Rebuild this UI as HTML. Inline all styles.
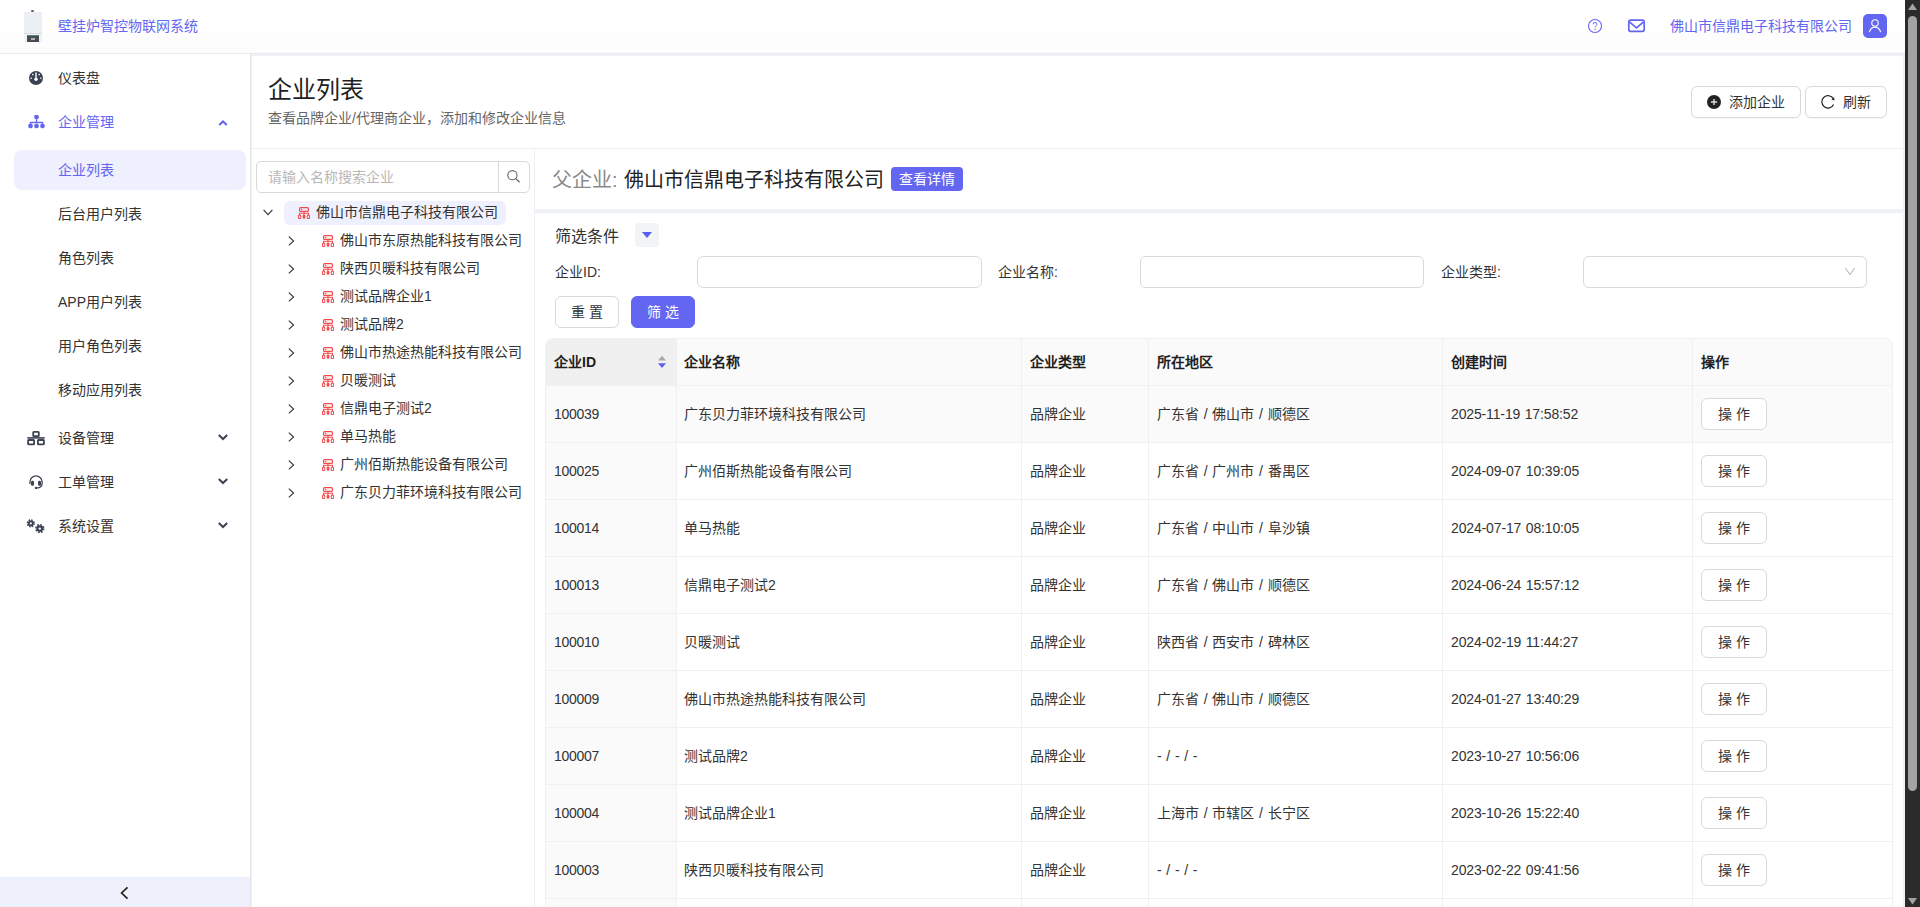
<!DOCTYPE html>
<html lang="zh-CN">
<head>
<meta charset="utf-8">
<style>
*{box-sizing:border-box;margin:0;padding:0}
html,body{width:1920px;height:907px;overflow:hidden}
body{font-family:"Liberation Sans",sans-serif;font-size:14px;color:#333;background:#fff;position:relative}
.abs{position:absolute}
#hdr{position:absolute;left:0;top:0;width:1905px;height:54px;background:linear-gradient(#fff 0,#fff 32px,#fdfdfd 32px);border-bottom:1px solid #eaeaea}
#side{position:absolute;left:0;top:54px;width:250px;height:853px;background:#fff}
#mainbg{position:absolute;left:250px;top:54px;width:1655px;height:853px;background:#eef2f6;border-left:1px solid #e3e5e9}
#main{position:absolute;left:252px;top:56px;width:1651px;height:851px;background:#fff}
#sb{position:absolute;left:1905px;top:0;width:15px;height:907px;background:#2b2b2b}
.nav{position:absolute;left:58px;font-size:14px;color:#333;line-height:20px;white-space:nowrap}

.btn{position:absolute;border:1px solid #d9d9d9;border-radius:6px;background:#fff;font-size:14px;line-height:30px;color:#333;white-space:nowrap;box-shadow:0 1px 1px rgba(0,0,0,.03)}
.btn2{position:absolute;border:1px solid #d9d9d9;border-radius:6px;background:#fff;font-size:14px;line-height:30px;text-align:center;white-space:nowrap}
.tn{position:absolute;font-size:14px;line-height:20px;color:#333;white-space:nowrap}
.lbl{position:absolute;top:262px;font-size:14px;line-height:20px;color:#333;white-space:nowrap}
.inp{position:absolute;top:256px;width:285px;height:32px;border:1px solid #d9d9d9;border-radius:6px;background:#fff}
.th{position:absolute;top:352px;font-size:14px;line-height:20px;font-weight:bold;color:#1f1f1f;white-space:nowrap}
.td{position:absolute;font-size:14px;line-height:20px;color:#333;white-space:nowrap;word-spacing:.8px}
.ob{position:absolute;left:1701px;width:66px;height:32px;border:1px solid #d9d9d9;border-radius:6px;background:#fff;font-size:14px;line-height:30px;text-align:center;color:#333}
</style>
</head>
<body>
<div id="hdr">
  <div class="abs" style="left:31px;top:10px;width:3px;height:2px;background:#666;border-radius:1px"></div>
  <div class="abs" style="left:24px;top:12px;width:18px;height:30px;background:#eceff3"></div>
  <div class="abs" style="left:24px;top:33px;width:18px;height:1px;background:#d8dce2"></div>
  <div class="abs" style="left:24px;top:34px;width:18px;height:8px;background:#f0f2f5"></div><div class="abs" style="left:27px;top:35px;width:12px;height:7px;background:#474c57"></div><div class="abs" style="left:27px;top:35px;width:12px;height:1px;background:#4f8a63"></div><div class="abs" style="left:31px;top:38px;width:4px;height:1.5px;background:#aeb3ba"></div>
  <div class="nav" style="left:58px;top:16px;color:#6366f1">壁挂炉智控物联网系统</div>
  <div class="nav" style="left:1670px;top:16px;color:#6366f1">佛山市信鼎电子科技有限公司</div>
  <div class="abs" style="left:1863px;top:14px;width:24px;height:24px;background:#6366f1;border-radius:5px"></div>
</div>
<div id="side">
  <div class="abs" style="left:14px;top:96px;width:232px;height:40px;background:#eef0fd;border-radius:8px"></div>
  <div class="nav" style="top:14px">仪表盘</div>
  <div class="nav" style="top:58px;color:#6366f1">企业管理</div>
  <div class="nav" style="top:106px;color:#6366f1">企业列表</div>
  <div class="nav" style="top:150px">后台用户列表</div>
  <div class="nav" style="top:194px">角色列表</div>
  <div class="nav" style="top:238px">APP用户列表</div>
  <div class="nav" style="top:282px">用户角色列表</div>
  <div class="nav" style="top:326px">移动应用列表</div>
  <div class="nav" style="top:374px">设备管理</div>
  <div class="nav" style="top:418px">工单管理</div>
  <div class="nav" style="top:462px">系统设置</div>
  <div class="abs" style="left:0;top:823px;width:250px;height:30px;background:#eef0fc"></div>
</div>
<div id="mainbg"></div>

<div id="main"></div>
<!-- page header -->
<div class="abs" style="left:268px;top:76px;font-size:24px;line-height:28px;color:#1f1f1f;white-space:nowrap">企业列表</div>
<div class="abs" style="left:268px;top:108px;font-size:14px;line-height:20px;color:#666;white-space:nowrap">查看品牌企业/代理商企业，添加和修改企业信息</div>
<div class="btn" style="left:1691px;top:86px;width:110px;height:32px"><span style="position:absolute;left:37px;top:0">添加企业</span></div>
<div class="btn" style="left:1805px;top:86px;width:82px;height:32px"><span style="position:absolute;left:37px;top:0">刷新</span></div>
<div class="abs" style="left:251px;top:148px;width:1652px;height:1px;background:#eef0f5"></div>
<!-- tree panel -->
<div class="abs" style="left:534px;top:149px;width:1px;height:758px;background:#eef0f5"></div>
<div class="abs" style="left:256px;top:161px;width:274px;height:32px;border:1px solid #d9d9d9;border-radius:5px;background:#fff"></div>
<div class="abs" style="left:498px;top:162px;width:1px;height:30px;background:#d9d9d9"></div>
<div class="abs" style="left:268px;top:167px;font-size:14px;line-height:20px;color:#b8b8b8;white-space:nowrap">请输入名称搜索企业</div>
<div class="abs" style="left:284px;top:201px;width:222px;height:24px;background:#eef0fd;border-radius:6px"></div>
<div class="tn" style="left:316px;top:202px">佛山市信鼎电子科技有限公司</div>
<div class="tn" style="left:340px;top:230px">佛山市东原热能科技有限公司</div>
<div class="tn" style="left:340px;top:258px">陕西贝暖科技有限公司</div>
<div class="tn" style="left:340px;top:286px">测试品牌企业1</div>
<div class="tn" style="left:340px;top:314px">测试品牌2</div>
<div class="tn" style="left:340px;top:342px">佛山市热途热能科技有限公司</div>
<div class="tn" style="left:340px;top:370px">贝暖测试</div>
<div class="tn" style="left:340px;top:398px">信鼎电子测试2</div>
<div class="tn" style="left:340px;top:426px">单马热能</div>
<div class="tn" style="left:340px;top:454px">广州佰斯热能设备有限公司</div>
<div class="tn" style="left:340px;top:482px">广东贝力菲环境科技有限公司</div>

<!-- right panel -->
<div class="abs" style="left:552px;top:166px;font-size:20px;line-height:28px;color:#8a8a8a;white-space:nowrap">父企业:</div>
<div class="abs" style="left:624px;top:166px;font-size:20px;line-height:28px;color:#222;white-space:nowrap">佛山市信鼎电子科技有限公司</div>
<div class="abs" style="left:891px;top:167px;width:72px;height:24px;background:#6366f1;border-radius:4px;color:#fff;font-size:14px;line-height:24px;text-align:center">查看详情</div>
<div class="abs" style="left:535px;top:209px;width:1368px;height:4px;background:#eef1f6"></div>
<div class="abs" style="left:555px;top:226px;font-size:16px;line-height:22px;color:#333;white-space:nowrap">筛选条件</div>
<div class="abs" style="left:635px;top:223px;width:24px;height:24px;background:#f3f4f6;border-radius:4px"></div>
<div class="lbl" style="left:555px">企业ID:</div>
<div class="lbl" style="left:998px">企业名称:</div>
<div class="lbl" style="left:1441px">企业类型:</div>
<div class="inp" style="left:697px"></div>
<div class="inp" style="left:1140px;width:284px"></div>
<div class="inp" style="left:1583px;width:284px"></div>
<div class="btn2" style="left:555px;top:296px;width:64px;height:32px;color:#333">重 置</div>
<div class="btn2" style="left:631px;top:296px;width:64px;height:32px;background:#6366f1;border-color:#6366f1;color:#fff">筛 选</div>
<div class="abs" style="left:545px;top:338px;width:1348px;height:569px;border-radius:8px 8px 0 0;overflow:hidden;border:1px solid #f0f0f0;border-bottom:none">
<div class="abs" style="left:0;top:0;width:1347px;height:46px;background:#fafafa"></div>
<div class="abs" style="left:0;top:0;width:130px;height:46px;background:#f0f0f0"></div>
<div class="abs" style="left:0;top:46px;width:1347px;height:57px;background:#fafafa"></div>
<div class="abs" style="left:0;top:103px;width:130px;height:470px;background:#fafafa"></div>
<div class="abs" style="left:130px;top:0;width:1px;height:570px;background:#f0f0f0"></div>
<div class="abs" style="left:475px;top:0;width:1px;height:570px;background:#f0f0f0"></div>
<div class="abs" style="left:602px;top:0;width:1px;height:570px;background:#f0f0f0"></div>
<div class="abs" style="left:896px;top:0;width:1px;height:570px;background:#f0f0f0"></div>
<div class="abs" style="left:1146px;top:0;width:1px;height:570px;background:#f0f0f0"></div>
<div class="abs" style="left:0;top:46px;width:1347px;height:1px;background:#f0f0f0"></div>
<div class="abs" style="left:0;top:103px;width:1347px;height:1px;background:#f0f0f0"></div>
<div class="abs" style="left:0;top:160px;width:1347px;height:1px;background:#f0f0f0"></div>
<div class="abs" style="left:0;top:217px;width:1347px;height:1px;background:#f0f0f0"></div>
<div class="abs" style="left:0;top:274px;width:1347px;height:1px;background:#f0f0f0"></div>
<div class="abs" style="left:0;top:331px;width:1347px;height:1px;background:#f0f0f0"></div>
<div class="abs" style="left:0;top:388px;width:1347px;height:1px;background:#f0f0f0"></div>
<div class="abs" style="left:0;top:445px;width:1347px;height:1px;background:#f0f0f0"></div>
<div class="abs" style="left:0;top:502px;width:1347px;height:1px;background:#f0f0f0"></div>
<div class="abs" style="left:0;top:559px;width:1347px;height:1px;background:#f0f0f0"></div>
</div>
<div class="th" style="left:554px">企业ID</div>
<div class="th" style="left:684px">企业名称</div>
<div class="th" style="left:1030px">企业类型</div>
<div class="th" style="left:1157px">所在地区</div>
<div class="th" style="left:1451px">创建时间</div>
<div class="th" style="left:1701px">操作</div>
<div class="td" style="left:554px;top:404px;letter-spacing:-.3px">100039</div><div class="td" style="left:684px;top:404px">广东贝力菲环境科技有限公司</div><div class="td" style="left:1030px;top:404px">品牌企业</div><div class="td" style="left:1157px;top:404px">广东省 / 佛山市 / 顺德区</div><div class="td" style="left:1451px;top:404px;letter-spacing:-.14px">2025-11-19 17:58:52</div><div class="ob" style="top:398px">操 作</div>
<div class="td" style="left:554px;top:461px;letter-spacing:-.3px">100025</div><div class="td" style="left:684px;top:461px">广州佰斯热能设备有限公司</div><div class="td" style="left:1030px;top:461px">品牌企业</div><div class="td" style="left:1157px;top:461px">广东省 / 广州市 / 番禺区</div><div class="td" style="left:1451px;top:461px;letter-spacing:-.14px">2024-09-07 10:39:05</div><div class="ob" style="top:455px">操 作</div>
<div class="td" style="left:554px;top:518px;letter-spacing:-.3px">100014</div><div class="td" style="left:684px;top:518px">单马热能</div><div class="td" style="left:1030px;top:518px">品牌企业</div><div class="td" style="left:1157px;top:518px">广东省 / 中山市 / 阜沙镇</div><div class="td" style="left:1451px;top:518px;letter-spacing:-.14px">2024-07-17 08:10:05</div><div class="ob" style="top:512px">操 作</div>
<div class="td" style="left:554px;top:575px;letter-spacing:-.3px">100013</div><div class="td" style="left:684px;top:575px">信鼎电子测试2</div><div class="td" style="left:1030px;top:575px">品牌企业</div><div class="td" style="left:1157px;top:575px">广东省 / 佛山市 / 顺德区</div><div class="td" style="left:1451px;top:575px;letter-spacing:-.14px">2024-06-24 15:57:12</div><div class="ob" style="top:569px">操 作</div>
<div class="td" style="left:554px;top:632px;letter-spacing:-.3px">100010</div><div class="td" style="left:684px;top:632px">贝暖测试</div><div class="td" style="left:1030px;top:632px">品牌企业</div><div class="td" style="left:1157px;top:632px">陕西省 / 西安市 / 碑林区</div><div class="td" style="left:1451px;top:632px;letter-spacing:-.14px">2024-02-19 11:44:27</div><div class="ob" style="top:626px">操 作</div>
<div class="td" style="left:554px;top:689px;letter-spacing:-.3px">100009</div><div class="td" style="left:684px;top:689px">佛山市热途热能科技有限公司</div><div class="td" style="left:1030px;top:689px">品牌企业</div><div class="td" style="left:1157px;top:689px">广东省 / 佛山市 / 顺德区</div><div class="td" style="left:1451px;top:689px;letter-spacing:-.14px">2024-01-27 13:40:29</div><div class="ob" style="top:683px">操 作</div>
<div class="td" style="left:554px;top:746px;letter-spacing:-.3px">100007</div><div class="td" style="left:684px;top:746px">测试品牌2</div><div class="td" style="left:1030px;top:746px">品牌企业</div><div class="td" style="left:1157px;top:746px">- / - / -</div><div class="td" style="left:1451px;top:746px;letter-spacing:-.14px">2023-10-27 10:56:06</div><div class="ob" style="top:740px">操 作</div>
<div class="td" style="left:554px;top:803px;letter-spacing:-.3px">100004</div><div class="td" style="left:684px;top:803px">测试品牌企业1</div><div class="td" style="left:1030px;top:803px">品牌企业</div><div class="td" style="left:1157px;top:803px">上海市 / 市辖区 / 长宁区</div><div class="td" style="left:1451px;top:803px;letter-spacing:-.14px">2023-10-26 15:22:40</div><div class="ob" style="top:797px">操 作</div>
<div class="td" style="left:554px;top:860px;letter-spacing:-.3px">100003</div><div class="td" style="left:684px;top:860px">陕西贝暖科技有限公司</div><div class="td" style="left:1030px;top:860px">品牌企业</div><div class="td" style="left:1157px;top:860px">- / - / -</div><div class="td" style="left:1451px;top:860px;letter-spacing:-.14px">2023-02-22 09:41:56</div><div class="ob" style="top:854px">操 作</div>



<!-- header icons -->
<svg class="abs" style="left:1587px;top:18px" width="16" height="16" viewBox="0 0 16 16"><circle cx="8" cy="8" r="6.5" fill="none" stroke="#6366f1" stroke-width="1.1"/><path d="M6.1 6.3a1.9 1.9 0 0 1 3.8 .1c0 1.3-1.9 1.4-1.9 2.9" fill="none" stroke="#6366f1" stroke-width="1"/><rect x="7.4" y="10.7" width="1.3" height="1.1" fill="#6366f1"/></svg>
<svg class="abs" style="left:1627px;top:18px" width="19" height="15" viewBox="0 0 19 15"><rect x="1.8" y="2.2" width="15.4" height="11.2" rx="1.8" fill="none" stroke="#6366f1" stroke-width="1.7"/><path d="M2.4 3.8 9.5 9.9 16.6 3.8" fill="none" stroke="#6366f1" stroke-width="1.7" stroke-linejoin="round"/></svg>
<svg class="abs" style="left:1863px;top:14px" width="24" height="24" viewBox="0 0 24 24"><circle cx="12" cy="9" r="3.2" fill="none" stroke="#fff" stroke-width="1.1"/><path d="M6.5 17.6c1-2.8 3-4.4 5.5-4.4s4.5 1.6 5.5 4.4" fill="none" stroke="#fff" stroke-width="1.2" stroke-linecap="round"/></svg>
<!-- sidebar icons -->
<svg class="abs" style="left:28px;top:70px" width="16" height="16" viewBox="0 0 16 16"><circle cx="8" cy="8" r="7" fill="#3b4254"/><rect x="7.3" y="2.2" width="1.4" height="6" rx=".7" fill="#fff"/><circle cx="8" cy="9.3" r="1.7" fill="#fff"/><circle cx="3.2" cy="8.3" r=".8" fill="#fff"/><circle cx="12.8" cy="8.3" r=".8" fill="#fff"/><circle cx="4.8" cy="4.6" r=".8" fill="#fff"/><circle cx="11.2" cy="4.6" r=".8" fill="#fff"/></svg>
<svg class="abs" style="left:28px;top:115px" width="17" height="14" viewBox="0 0 17 14"><rect x="6.3" y="0" width="4.4" height="4" rx="1.2" fill="#6366f1"/><path d="M8.5 3.5V7.5M2.5 10V7.5H14.5V10" fill="none" stroke="#6366f1" stroke-width="1.3"/><rect x="0.3" y="8.8" width="4.4" height="4.4" rx="1.6" fill="#6366f1"/><rect x="6.3" y="8.8" width="4.4" height="4.4" rx="1.6" fill="#6366f1"/><rect x="12.3" y="8.8" width="4.4" height="4.4" rx="1.6" fill="#6366f1"/></svg>
<svg class="abs" style="left:27px;top:431px" width="18" height="15" viewBox="0 0 18 15"><rect x="6.2" y=".9" width="5.6" height="4.2" rx=".6" fill="none" stroke="#3b4254" stroke-width="1.8"/><path d="M.3 6.9H17.7" stroke="#3b4254" stroke-width="1.6"/><rect x="1.1" y="9" width="6" height="4.3" rx=".6" fill="none" stroke="#3b4254" stroke-width="1.8"/><rect x="10.9" y="9" width="6" height="4.3" rx=".6" fill="none" stroke="#3b4254" stroke-width="1.8"/></svg>
<svg class="abs" style="left:28px;top:474px" width="16" height="16" viewBox="0 0 16 16"><path d="M1.9 9.6V8a6.1 6.1 0 0 1 12.2 0v1.6c0 2.2-1.2 3.7-3.8 4.3H8" fill="none" stroke="#3b4254" stroke-width="1.3" stroke-linecap="round"/><rect x="3" y="6.8" width="3" height="5" rx="1.4" fill="#3b4254"/><rect x="10" y="6.8" width="3" height="5" rx="1.4" fill="#3b4254"/><circle cx="8" cy="13.9" r="1.2" fill="#3b4254"/></svg>
<svg class="abs" style="left:26px;top:518px" width="20" height="16" viewBox="0 0 20 16"><circle cx="4.8" cy="5.4" r="2.95" fill="#3b4254"/><circle cx="4.8" cy="5.4" r="3.28" fill="none" stroke="#3b4254" stroke-width="1.72" stroke-dasharray="1.42 1.16"/><circle cx="4.8" cy="5.4" r="1.07" fill="#fff"/><circle cx="13.8" cy="10.6" r="3.31" fill="#3b4254"/><circle cx="13.8" cy="10.6" r="3.68" fill="none" stroke="#3b4254" stroke-width="1.93" stroke-dasharray="1.59 1.30"/><circle cx="13.8" cy="10.6" r="1.20" fill="#fff"/></svg>
<!-- sidebar chevrons -->
<svg class="abs" style="left:217px;top:119px" width="12" height="8" viewBox="0 0 12 8"><path d="M2.2 6 6 2.4 9.8 6" fill="none" stroke="#6366f1" stroke-width="2"/></svg>
<svg class="abs" style="left:217px;top:433px" width="12" height="8" viewBox="0 0 12 8"><path d="M1.8 2 6 6 10.2 2" fill="none" stroke="#3b4254" stroke-width="2"/></svg>
<svg class="abs" style="left:217px;top:477px" width="12" height="8" viewBox="0 0 12 8"><path d="M1.8 2 6 6 10.2 2" fill="none" stroke="#3b4254" stroke-width="2"/></svg>
<svg class="abs" style="left:217px;top:521px" width="12" height="8" viewBox="0 0 12 8"><path d="M1.8 2 6 6 10.2 2" fill="none" stroke="#3b4254" stroke-width="2"/></svg>
<svg class="abs" style="left:117px;top:885px" width="14" height="16" viewBox="0 0 14 16"><path d="M10.5 2.3 4.6 8 10.5 13.7" fill="none" stroke="#222" stroke-width="1.7"/></svg>
<div id="sb"></div>
<svg class="abs" style="left:262px;top:207px" width="12" height="10" viewBox="0 0 12 10"><path d="M1.6 2.8 6 7.6 10.4 2.8" fill="none" stroke="#333" stroke-width="1.1"/></svg>
<svg class="abs" style="left:298px;top:207px" width="12" height="12" viewBox="0 0 13 13"><rect x="1.7" y=".7" width="9.6" height="4.1" rx="1" fill="none" stroke="#ef4b4b" stroke-width="1.3"/><circle cx="4" cy="2.75" r=".8" fill="#ef4b4b"/><path d="M6.5 4.8V8.5M1.75 9V6.7H11.25V9" fill="none" stroke="#ef4b4b" stroke-width="1.2"/><path d="M.5 9.8a1.25 1.25 0 0 1 2.5 0V11.6a.9.9 0 0 1-.9.9H1.4a.9.9 0 0 1-.9-.9Z" fill="none" stroke="#ef4b4b" stroke-width="1.1"/><rect x="5" y="8.5" width="3" height="4.2" rx="1.2" fill="#ef4b4b"/><path d="M10 9.8a1.25 1.25 0 0 1 2.5 0V11.6a.9.9 0 0 1-.9.9h-.7a.9.9 0 0 1-.9-.9Z" fill="none" stroke="#ef4b4b" stroke-width="1.1"/></svg>
<svg class="abs" style="left:286px;top:235px" width="10" height="12" viewBox="0 0 10 12"><path d="M2.8 1.6 7.6 6 2.8 10.4" fill="none" stroke="#333" stroke-width="1.1"/></svg><svg class="abs" style="left:322px;top:235px" width="12" height="12" viewBox="0 0 13 13"><rect x="1.7" y=".7" width="9.6" height="4.1" rx="1" fill="none" stroke="#ef4b4b" stroke-width="1.3"/><circle cx="4" cy="2.75" r=".8" fill="#ef4b4b"/><path d="M6.5 4.8V8.5M1.75 9V6.7H11.25V9" fill="none" stroke="#ef4b4b" stroke-width="1.2"/><path d="M.5 9.8a1.25 1.25 0 0 1 2.5 0V11.6a.9.9 0 0 1-.9.9H1.4a.9.9 0 0 1-.9-.9Z" fill="none" stroke="#ef4b4b" stroke-width="1.1"/><rect x="5" y="8.5" width="3" height="4.2" rx="1.2" fill="#ef4b4b"/><path d="M10 9.8a1.25 1.25 0 0 1 2.5 0V11.6a.9.9 0 0 1-.9.9h-.7a.9.9 0 0 1-.9-.9Z" fill="none" stroke="#ef4b4b" stroke-width="1.1"/></svg>
<svg class="abs" style="left:286px;top:263px" width="10" height="12" viewBox="0 0 10 12"><path d="M2.8 1.6 7.6 6 2.8 10.4" fill="none" stroke="#333" stroke-width="1.1"/></svg><svg class="abs" style="left:322px;top:263px" width="12" height="12" viewBox="0 0 13 13"><rect x="1.7" y=".7" width="9.6" height="4.1" rx="1" fill="none" stroke="#ef4b4b" stroke-width="1.3"/><circle cx="4" cy="2.75" r=".8" fill="#ef4b4b"/><path d="M6.5 4.8V8.5M1.75 9V6.7H11.25V9" fill="none" stroke="#ef4b4b" stroke-width="1.2"/><path d="M.5 9.8a1.25 1.25 0 0 1 2.5 0V11.6a.9.9 0 0 1-.9.9H1.4a.9.9 0 0 1-.9-.9Z" fill="none" stroke="#ef4b4b" stroke-width="1.1"/><rect x="5" y="8.5" width="3" height="4.2" rx="1.2" fill="#ef4b4b"/><path d="M10 9.8a1.25 1.25 0 0 1 2.5 0V11.6a.9.9 0 0 1-.9.9h-.7a.9.9 0 0 1-.9-.9Z" fill="none" stroke="#ef4b4b" stroke-width="1.1"/></svg>
<svg class="abs" style="left:286px;top:291px" width="10" height="12" viewBox="0 0 10 12"><path d="M2.8 1.6 7.6 6 2.8 10.4" fill="none" stroke="#333" stroke-width="1.1"/></svg><svg class="abs" style="left:322px;top:291px" width="12" height="12" viewBox="0 0 13 13"><rect x="1.7" y=".7" width="9.6" height="4.1" rx="1" fill="none" stroke="#ef4b4b" stroke-width="1.3"/><circle cx="4" cy="2.75" r=".8" fill="#ef4b4b"/><path d="M6.5 4.8V8.5M1.75 9V6.7H11.25V9" fill="none" stroke="#ef4b4b" stroke-width="1.2"/><path d="M.5 9.8a1.25 1.25 0 0 1 2.5 0V11.6a.9.9 0 0 1-.9.9H1.4a.9.9 0 0 1-.9-.9Z" fill="none" stroke="#ef4b4b" stroke-width="1.1"/><rect x="5" y="8.5" width="3" height="4.2" rx="1.2" fill="#ef4b4b"/><path d="M10 9.8a1.25 1.25 0 0 1 2.5 0V11.6a.9.9 0 0 1-.9.9h-.7a.9.9 0 0 1-.9-.9Z" fill="none" stroke="#ef4b4b" stroke-width="1.1"/></svg>
<svg class="abs" style="left:286px;top:319px" width="10" height="12" viewBox="0 0 10 12"><path d="M2.8 1.6 7.6 6 2.8 10.4" fill="none" stroke="#333" stroke-width="1.1"/></svg><svg class="abs" style="left:322px;top:319px" width="12" height="12" viewBox="0 0 13 13"><rect x="1.7" y=".7" width="9.6" height="4.1" rx="1" fill="none" stroke="#ef4b4b" stroke-width="1.3"/><circle cx="4" cy="2.75" r=".8" fill="#ef4b4b"/><path d="M6.5 4.8V8.5M1.75 9V6.7H11.25V9" fill="none" stroke="#ef4b4b" stroke-width="1.2"/><path d="M.5 9.8a1.25 1.25 0 0 1 2.5 0V11.6a.9.9 0 0 1-.9.9H1.4a.9.9 0 0 1-.9-.9Z" fill="none" stroke="#ef4b4b" stroke-width="1.1"/><rect x="5" y="8.5" width="3" height="4.2" rx="1.2" fill="#ef4b4b"/><path d="M10 9.8a1.25 1.25 0 0 1 2.5 0V11.6a.9.9 0 0 1-.9.9h-.7a.9.9 0 0 1-.9-.9Z" fill="none" stroke="#ef4b4b" stroke-width="1.1"/></svg>
<svg class="abs" style="left:286px;top:347px" width="10" height="12" viewBox="0 0 10 12"><path d="M2.8 1.6 7.6 6 2.8 10.4" fill="none" stroke="#333" stroke-width="1.1"/></svg><svg class="abs" style="left:322px;top:347px" width="12" height="12" viewBox="0 0 13 13"><rect x="1.7" y=".7" width="9.6" height="4.1" rx="1" fill="none" stroke="#ef4b4b" stroke-width="1.3"/><circle cx="4" cy="2.75" r=".8" fill="#ef4b4b"/><path d="M6.5 4.8V8.5M1.75 9V6.7H11.25V9" fill="none" stroke="#ef4b4b" stroke-width="1.2"/><path d="M.5 9.8a1.25 1.25 0 0 1 2.5 0V11.6a.9.9 0 0 1-.9.9H1.4a.9.9 0 0 1-.9-.9Z" fill="none" stroke="#ef4b4b" stroke-width="1.1"/><rect x="5" y="8.5" width="3" height="4.2" rx="1.2" fill="#ef4b4b"/><path d="M10 9.8a1.25 1.25 0 0 1 2.5 0V11.6a.9.9 0 0 1-.9.9h-.7a.9.9 0 0 1-.9-.9Z" fill="none" stroke="#ef4b4b" stroke-width="1.1"/></svg>
<svg class="abs" style="left:286px;top:375px" width="10" height="12" viewBox="0 0 10 12"><path d="M2.8 1.6 7.6 6 2.8 10.4" fill="none" stroke="#333" stroke-width="1.1"/></svg><svg class="abs" style="left:322px;top:375px" width="12" height="12" viewBox="0 0 13 13"><rect x="1.7" y=".7" width="9.6" height="4.1" rx="1" fill="none" stroke="#ef4b4b" stroke-width="1.3"/><circle cx="4" cy="2.75" r=".8" fill="#ef4b4b"/><path d="M6.5 4.8V8.5M1.75 9V6.7H11.25V9" fill="none" stroke="#ef4b4b" stroke-width="1.2"/><path d="M.5 9.8a1.25 1.25 0 0 1 2.5 0V11.6a.9.9 0 0 1-.9.9H1.4a.9.9 0 0 1-.9-.9Z" fill="none" stroke="#ef4b4b" stroke-width="1.1"/><rect x="5" y="8.5" width="3" height="4.2" rx="1.2" fill="#ef4b4b"/><path d="M10 9.8a1.25 1.25 0 0 1 2.5 0V11.6a.9.9 0 0 1-.9.9h-.7a.9.9 0 0 1-.9-.9Z" fill="none" stroke="#ef4b4b" stroke-width="1.1"/></svg>
<svg class="abs" style="left:286px;top:403px" width="10" height="12" viewBox="0 0 10 12"><path d="M2.8 1.6 7.6 6 2.8 10.4" fill="none" stroke="#333" stroke-width="1.1"/></svg><svg class="abs" style="left:322px;top:403px" width="12" height="12" viewBox="0 0 13 13"><rect x="1.7" y=".7" width="9.6" height="4.1" rx="1" fill="none" stroke="#ef4b4b" stroke-width="1.3"/><circle cx="4" cy="2.75" r=".8" fill="#ef4b4b"/><path d="M6.5 4.8V8.5M1.75 9V6.7H11.25V9" fill="none" stroke="#ef4b4b" stroke-width="1.2"/><path d="M.5 9.8a1.25 1.25 0 0 1 2.5 0V11.6a.9.9 0 0 1-.9.9H1.4a.9.9 0 0 1-.9-.9Z" fill="none" stroke="#ef4b4b" stroke-width="1.1"/><rect x="5" y="8.5" width="3" height="4.2" rx="1.2" fill="#ef4b4b"/><path d="M10 9.8a1.25 1.25 0 0 1 2.5 0V11.6a.9.9 0 0 1-.9.9h-.7a.9.9 0 0 1-.9-.9Z" fill="none" stroke="#ef4b4b" stroke-width="1.1"/></svg>
<svg class="abs" style="left:286px;top:431px" width="10" height="12" viewBox="0 0 10 12"><path d="M2.8 1.6 7.6 6 2.8 10.4" fill="none" stroke="#333" stroke-width="1.1"/></svg><svg class="abs" style="left:322px;top:431px" width="12" height="12" viewBox="0 0 13 13"><rect x="1.7" y=".7" width="9.6" height="4.1" rx="1" fill="none" stroke="#ef4b4b" stroke-width="1.3"/><circle cx="4" cy="2.75" r=".8" fill="#ef4b4b"/><path d="M6.5 4.8V8.5M1.75 9V6.7H11.25V9" fill="none" stroke="#ef4b4b" stroke-width="1.2"/><path d="M.5 9.8a1.25 1.25 0 0 1 2.5 0V11.6a.9.9 0 0 1-.9.9H1.4a.9.9 0 0 1-.9-.9Z" fill="none" stroke="#ef4b4b" stroke-width="1.1"/><rect x="5" y="8.5" width="3" height="4.2" rx="1.2" fill="#ef4b4b"/><path d="M10 9.8a1.25 1.25 0 0 1 2.5 0V11.6a.9.9 0 0 1-.9.9h-.7a.9.9 0 0 1-.9-.9Z" fill="none" stroke="#ef4b4b" stroke-width="1.1"/></svg>
<svg class="abs" style="left:286px;top:459px" width="10" height="12" viewBox="0 0 10 12"><path d="M2.8 1.6 7.6 6 2.8 10.4" fill="none" stroke="#333" stroke-width="1.1"/></svg><svg class="abs" style="left:322px;top:459px" width="12" height="12" viewBox="0 0 13 13"><rect x="1.7" y=".7" width="9.6" height="4.1" rx="1" fill="none" stroke="#ef4b4b" stroke-width="1.3"/><circle cx="4" cy="2.75" r=".8" fill="#ef4b4b"/><path d="M6.5 4.8V8.5M1.75 9V6.7H11.25V9" fill="none" stroke="#ef4b4b" stroke-width="1.2"/><path d="M.5 9.8a1.25 1.25 0 0 1 2.5 0V11.6a.9.9 0 0 1-.9.9H1.4a.9.9 0 0 1-.9-.9Z" fill="none" stroke="#ef4b4b" stroke-width="1.1"/><rect x="5" y="8.5" width="3" height="4.2" rx="1.2" fill="#ef4b4b"/><path d="M10 9.8a1.25 1.25 0 0 1 2.5 0V11.6a.9.9 0 0 1-.9.9h-.7a.9.9 0 0 1-.9-.9Z" fill="none" stroke="#ef4b4b" stroke-width="1.1"/></svg>
<svg class="abs" style="left:286px;top:487px" width="10" height="12" viewBox="0 0 10 12"><path d="M2.8 1.6 7.6 6 2.8 10.4" fill="none" stroke="#333" stroke-width="1.1"/></svg><svg class="abs" style="left:322px;top:487px" width="12" height="12" viewBox="0 0 13 13"><rect x="1.7" y=".7" width="9.6" height="4.1" rx="1" fill="none" stroke="#ef4b4b" stroke-width="1.3"/><circle cx="4" cy="2.75" r=".8" fill="#ef4b4b"/><path d="M6.5 4.8V8.5M1.75 9V6.7H11.25V9" fill="none" stroke="#ef4b4b" stroke-width="1.2"/><path d="M.5 9.8a1.25 1.25 0 0 1 2.5 0V11.6a.9.9 0 0 1-.9.9H1.4a.9.9 0 0 1-.9-.9Z" fill="none" stroke="#ef4b4b" stroke-width="1.1"/><rect x="5" y="8.5" width="3" height="4.2" rx="1.2" fill="#ef4b4b"/><path d="M10 9.8a1.25 1.25 0 0 1 2.5 0V11.6a.9.9 0 0 1-.9.9h-.7a.9.9 0 0 1-.9-.9Z" fill="none" stroke="#ef4b4b" stroke-width="1.1"/></svg>
<svg class="abs" style="left:505px;top:168px" width="16" height="16" viewBox="0 0 16 16"><circle cx="7.4" cy="7.2" r="4.6" fill="none" stroke="#666" stroke-width="1.1"/><path d="M10.7 10.5 14.6 14.3" fill="none" stroke="#666" stroke-width="1.2"/></svg>
<svg class="abs" style="left:641px;top:231px" width="12" height="8" viewBox="0 0 12 8"><path d="M1 1H11L6 7Z" fill="#5b5ff0"/></svg>
<svg class="abs" style="left:1843px;top:266px" width="14" height="11" viewBox="0 0 14 11"><path d="M2.2 2 7 8.6 11.8 2" fill="none" stroke="#bbb" stroke-width="1.1"/></svg>
<svg class="abs" style="left:656px;top:354px" width="12" height="16" viewBox="0 0 12 16"><path d="M2 6.6H10L6 1.8Z" fill="#a8a8a8"/><path d="M2 9.2H10L6 14Z" fill="#5b5ff0"/></svg>
<svg class="abs" style="left:1706px;top:94px" width="16" height="16" viewBox="0 0 16 16"><circle cx="8" cy="8" r="7" fill="#222"/><path d="M8 4.9V11.1M4.9 8H11.1" stroke="#ddd" stroke-width="1.4"/></svg>
<svg class="abs" style="left:1820px;top:94px" width="16" height="16" viewBox="0 0 16 16"><path d="M13.6 10.6A6.2 6.2 0 1 1 13.4 4.8" fill="none" stroke="#222" stroke-width="1.2"/><path d="M11.4 5.6 14.2 3.3 14.4 6.4Z" fill="#222"/></svg>
<div class="abs" style="left:1908px;top:16px;width:9px;height:775px;background:#a3a3a3;border-radius:4.5px"></div>
<svg class="abs" style="left:1905px;top:0" width="15" height="14" viewBox="0 0 15 14"><path d="M3 10H12L7.5 3.4Z" fill="#a3a3a3"/></svg>
<svg class="abs" style="left:1905px;top:893px" width="15" height="14" viewBox="0 0 15 14"><path d="M3 5H12L7.5 11.6Z" fill="#a3a3a3"/></svg>
</body>
</html>
